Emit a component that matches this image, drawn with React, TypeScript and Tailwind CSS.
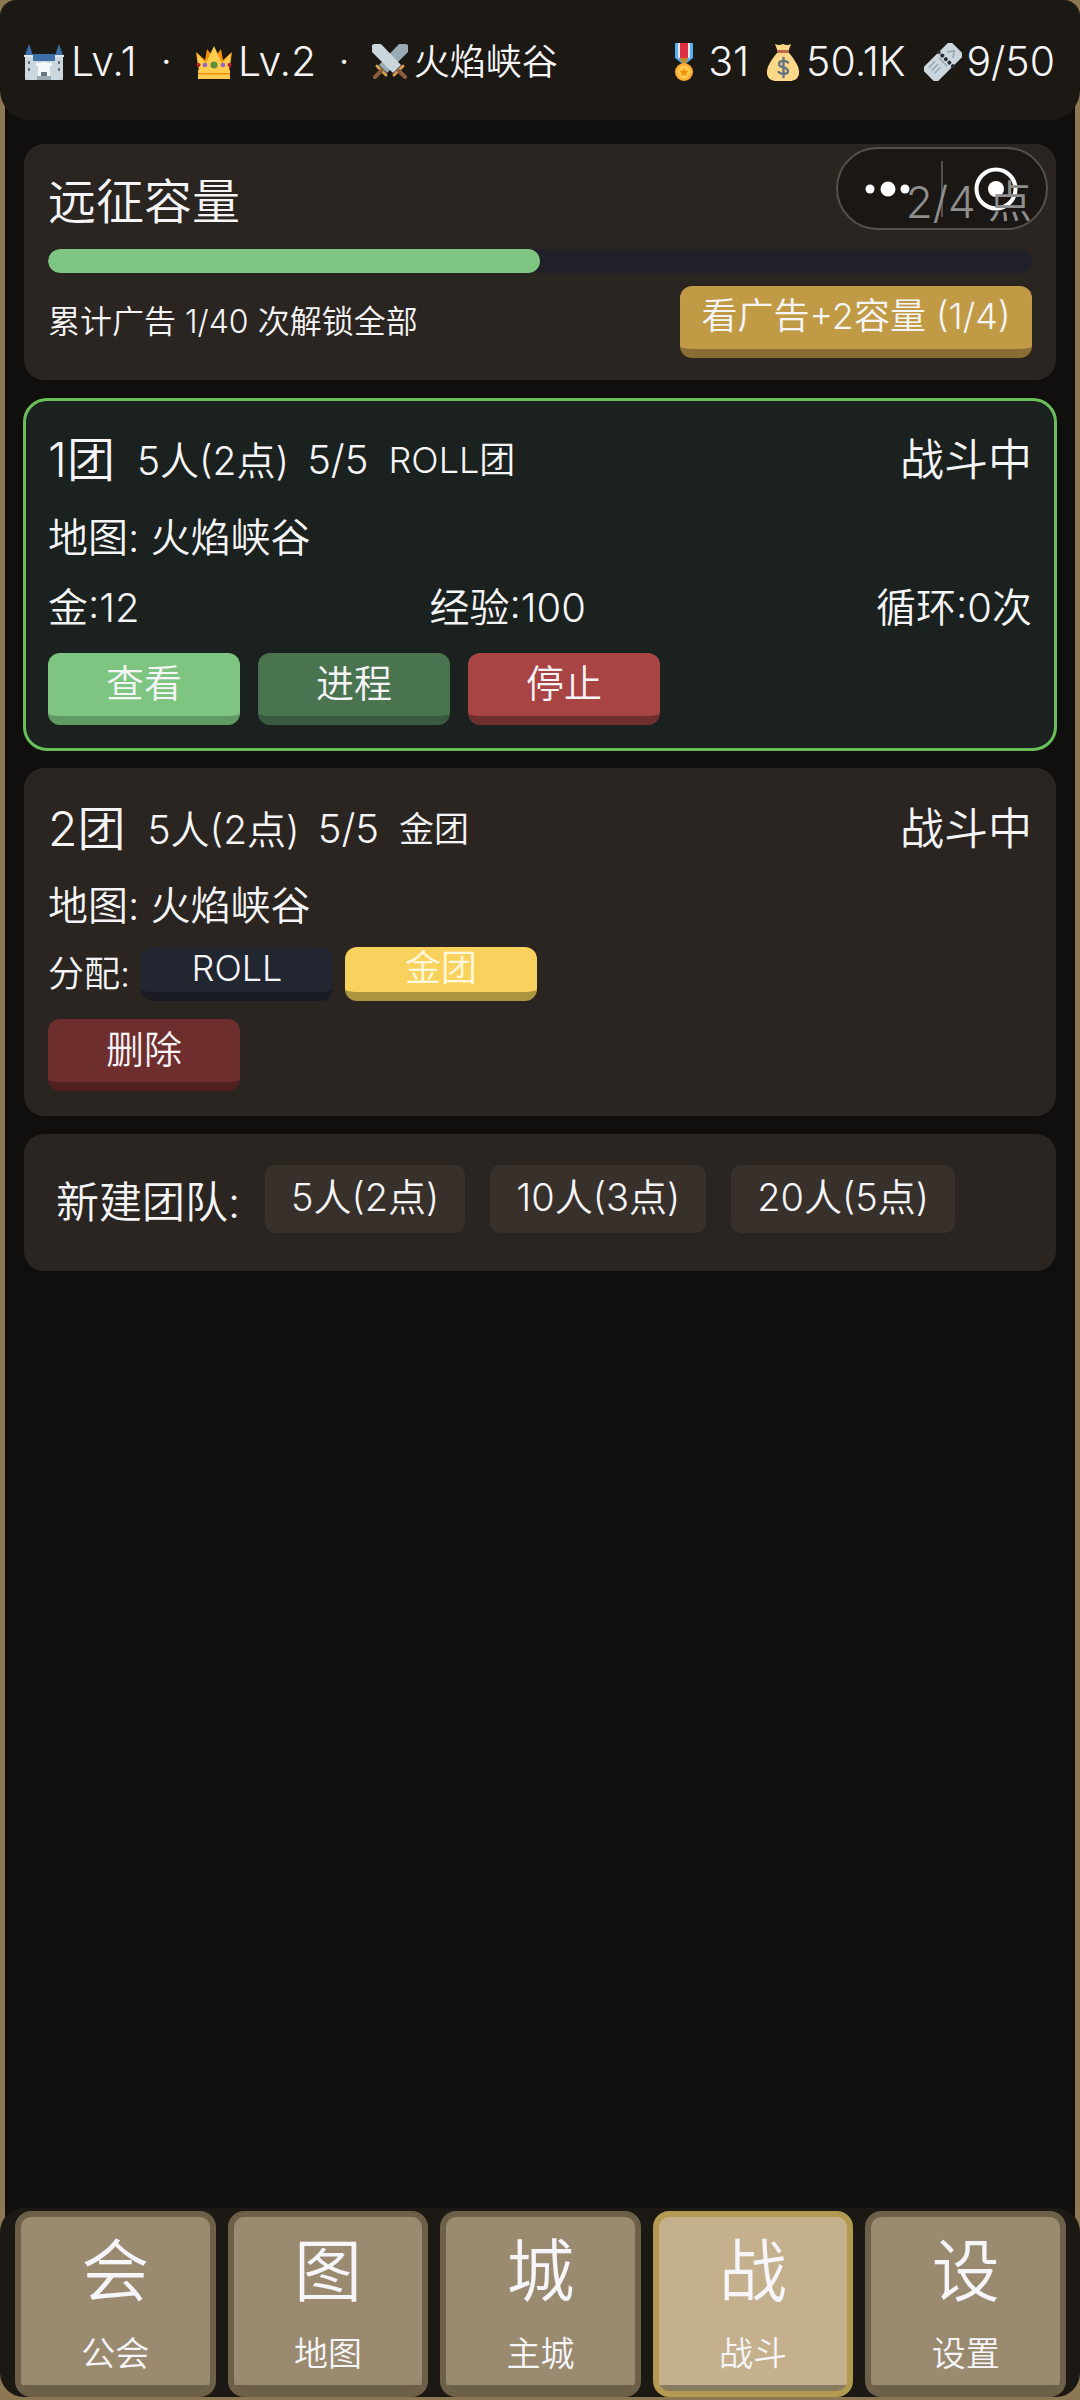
const font = { fontFamily: 'Inter, "Noto Sans CJK SC", sans-serif' };
const Castle = () => (
  <svg viewBox="0 0 40 36" className="w-[40px] h-[36px]">
    <rect x="1" y="11" width="38" height="25" rx="1" fill="#ccd6dd" />
    <path d="M1 11 L5 0 L9 11Z M31 11 L35 0 L39 11Z" fill="#3b6fa5" />
    <rect x="9" y="10" width="22" height="7" fill="#3b6fa5" />
    <rect x="0" y="11" width="9" height="2" fill="#e1e8ed" /><rect x="31" y="11" width="9" height="2" fill="#e1e8ed" />
    <path d="M14 36 V24 a6 6 0 0 1 12 0 V36Z" fill="#f5f8fa" />
    <rect x="12" y="19" width="16" height="3" fill="#f5f8fa" />
    <rect x="17" y="28" width="6" height="8" fill="#66757f" />
    <rect x="13" y="32" width="14" height="4" fill="#99aab5" />
    <rect x="4" y="17" width="2" height="3" fill="#66757f" /><rect x="34" y="17" width="2" height="3" fill="#66757f" />
    <rect x="4" y="24" width="2" height="3" fill="#66757f" /><rect x="34" y="24" width="2" height="3" fill="#66757f" />
  </svg>
);
const Crown = () => (
  <svg viewBox="0 0 36 34" className="w-[36px] h-[34px]">
    <path d="M2 22 L0 7 L9 15 L11 4 L18 13 L25 4 L27 15 L36 7 L34 22Z" fill="#f4900c" />
    <path d="M3 27 L1 8 L10 18 L18 1 L26 18 L35 8 L33 27Z" fill="#ffcc4d" />
    <rect x="2" y="25" width="32" height="9" fill="#ffcc4d" /><rect x="2" y="28" width="32" height="1.5" fill="#f4900c" />
    <circle cx="18" cy="20" r="3.6" fill="#5c913b" />
    <circle cx="9" cy="20" r="2.3" fill="#9266cc" /><circle cx="27" cy="20" r="2.3" fill="#9266cc" />
    <circle cx="2.5" cy="20" r="2" fill="#be1931" /><circle cx="33.5" cy="20" r="2" fill="#be1931" />
  </svg>
);
const Swords = () => (
  <svg viewBox="0 0 36 36" className="w-[36px] h-[36px]">
    <path d="M36 1 L34 0 L27 0 L7 21 L15 29 L36 8Z" fill="#99aab5" />
    <path d="M0 1 L2 0 L9 0 L29 21 L21 29 L0 8Z" fill="#ccd6dd" />
    <path d="M5 22 L14 31 M31 22 L22 31" stroke="#d99e4f" strokeWidth="3" strokeLinecap="round" />
    <path d="M9 27 L3 33 M27 27 L33 33" stroke="#8a5b3c" strokeWidth="4" strokeLinecap="round" />
  </svg>
);
const Medal = () => (
  <svg viewBox="0 0 20 38" className="w-[20px] h-[38px]">
    <path d="M1 0 H19 V15 L10 22 L1 15Z" fill="#55acee" />
    <rect x="4" y="0" width="12" height="15" fill="#e1e8ed" />
    <rect x="6" y="0" width="8" height="15" fill="#dd2e44" />
    <path d="M6 15 H14 L12 20 H8Z" fill="#c68a1f" />
    <circle cx="10" cy="29" r="9" fill="#ffac33" />
    <circle cx="10" cy="29" r="6.5" fill="#ffcc4d" />
    <path d="M10 24.5 L11.4 27.8 L14.6 28 L12.2 30.2 L13 33.4 L10 31.6 L7 33.4 L7.8 30.2 L5.4 28 L8.6 27.8Z" fill="#f4900c" />
  </svg>
);
const Bag = () => (
  <svg viewBox="0 0 34 38" className="w-[34px] h-[38px] block">
    <path d="M9 1 Q13 3 17 1 Q21 3 25 1 L22 9 H12Z" fill="#fdd888" />
    <rect x="11" y="7" width="12" height="3" rx="1" fill="#bf6952" />
    <path d="M11 10 H23 C28 16 34 24 33 31 C32 36 28 38 24 38 H10 C6 38 2 36 1 31 C0 24 6 16 11 10Z" fill="#fdd888" />
    <path d="M22 19.5 C20.5 17.5 13 17 13 21 C13 25.5 22 23.5 22 28 C22 32 14.5 31.5 12.5 29 M17.5 15 V34" stroke="#67757f" strokeWidth="2.4" fill="none" strokeLinecap="round" />
  </svg>
);
const Ticket = () => (
  <svg viewBox="0 0 38 38" className="w-[38px] h-[38px] block">
    <g transform="rotate(45 19 19)">
      <rect x="9" y="-1" width="20" height="40" rx="3" fill="#ccd6dd" />
      <path d="M13 19 H25 M13 24 V33 M17 24 V33 M21 24 V33" stroke="#99aab5" strokeWidth="1.6" />
      <circle cx="9" cy="15" r="2" fill="#292f33" /><circle cx="14" cy="15" r="2" fill="#292f33" /><circle cx="19" cy="15" r="2" fill="#292f33" /><circle cx="24" cy="15" r="2" fill="#292f33" /><circle cx="29" cy="15" r="2" fill="#292f33" />
      <path d="M15 9 L19 3 L23 9" stroke="#99aab5" strokeWidth="1.6" fill="none" />
    </g>
  </svg>
);
function Btn({ label, bg, base, text = 'text-[#f5f5f7]', w = 'w-[192px]', h = 'h-[72px]', size = 'text-[38px]' }: { label: string; bg: string; base: string; text?: string; w?: string; h?: string; size?: string }) {
  return (
    <div className={`${w} ${h} ${bg} ${base} ${text} ${size} rounded-[12px] border-b-[9px] flex items-center justify-center leading-none pb-[3px] whitespace-nowrap`}>
      {label}
    </div>
  );
}
function Tab({ icon, label, active }: { icon: string; label: string; active?: boolean }) {
  return (
    <div className={`flex-1 h-[186px] rounded-[16px] border-[6px] ${active ? 'border-[#b29a50] bg-[#c4b08c]' : 'border-[#6e5f49] bg-[#9a8a6f]'} overflow-hidden flex flex-col items-center text-[#f5f5fa]`}>
      <div className="text-[68px] leading-none mt-[20px]">{icon}</div>
      <div className="text-[34px] leading-none mt-[32px]">{label}</div>
      <div className={`mt-auto w-full h-[6px] ${active ? 'bg-[#887a5e]' : 'bg-[#6b5e49]'}`} />
    </div>
  );
}
export default function App() {
  return (
    <div style={font} className="w-[1080px] h-[2400px] bg-[#8c7853] overflow-hidden flex flex-col text-[#f5f5f7] font-[350] relative">
      <div className="h-[120px] shrink-0 bg-[#1c1914] rounded-b-[30px] rounded-t-[16px] flex items-center justify-between pl-[24px] pr-[25px] pt-[3px] text-[41px] relative z-10 whitespace-nowrap">
        <div className="flex items-center">
          <Castle /><span className="ml-[7px]">Lv.1</span><span className="mx-[24px]">·</span>
          <Crown /><span className="ml-[6px]">Lv.2</span><span className="mx-[22px]">·</span>
          <Swords /><span className="ml-[6px] text-[36px]">火焰峡谷</span>
        </div>
        <div className="flex items-center">
          <Medal /><span className="ml-[14px]">31</span>
          <span className="ml-[17px]"><Bag /></span><span className="ml-[6px]">50.1K</span>
          <span className="ml-[19px]"><Ticket /></span><span className="ml-[4px]">9/50</span>
        </div>
      </div>
      <div className="flex-1 mx-[5px] -mt-[30px] pt-[54px] bg-[#100f0d] px-[19px] flex flex-col">
        <div className="h-[236px] shrink-0 bg-[#2a2521] rounded-[20px] px-[24px] pt-[28px] flex flex-col">
          <div className="flex justify-between items-center h-[60px]">
            <span className="text-[48px] leading-none">远征容量</span>
            <span className="text-[44px] leading-none text-[#8f8f8f] relative z-30">2/4 点</span>
          </div>
          <div className="h-[24px] mt-[17px] bg-[#1f2028] rounded-full overflow-hidden">
            <div className="h-full w-1/2 bg-[#7dc581] rounded-full" />
          </div>
          <div className="flex justify-between items-center mt-[13px]">
            <span className="text-[32px] leading-none">累计广告 1/40 次解锁全部</span>
            <Btn label="看广告+2容量 (1/4)" bg="bg-[#c09a45]" base="border-[#896c33]" w="w-[352px]" size="text-[36px]" />
          </div>
        </div>
        <div className="h-[353px] shrink-0 mt-[18px] mx-[-1px] bg-[#1a211e] border-[3px] border-[#6abf5a] rounded-[24px] px-[22px] flex flex-col">
          <div className="flex justify-between items-center mt-[31px] h-[56px]">
            <div className="flex items-center">
              <span className="text-[48px] leading-none mr-[22px]">1团</span>
              <span className="text-[39px] leading-none mr-[18px]">5人(2点)</span>
              <span className="text-[40px] leading-none mr-[20px]">5/5</span>
              <span className="text-[36px] leading-none">ROLL团</span>
            </div>
            <span className="text-[44px] leading-none">战斗中</span>
          </div>
          <div className="text-[40px] leading-none mt-[30px]">地图: 火焰峡谷</div>
          <div className="flex justify-between text-[40px] leading-none mt-[30px]">
            <span>金:12</span><span>经验:100</span><span>循环:0次</span>
          </div>
          <div className="flex gap-[18px] mt-[25px]">
            <Btn label="查看" bg="bg-[#7dc581]" base="border-[#5f9a63]" />
            <Btn label="进程" bg="bg-[#4a7350]" base="border-[#3a5a3f]" />
            <Btn label="停止" bg="bg-[#a84444]" base="border-[#6e2f2f]" />
          </div>
        </div>
        <div className="h-[348px] shrink-0 mt-[17px] bg-[#2a2521] rounded-[20px] px-[24px] flex flex-col">
          <div className="flex justify-between items-center mt-[33px] h-[56px]">
            <div className="flex items-center">
              <span className="text-[48px] leading-none mr-[22px]">2团</span>
              <span className="text-[39px] leading-none mr-[18px]">5人(2点)</span>
              <span className="text-[40px] leading-none mr-[20px]">5/5</span>
              <span className="text-[35px] leading-none">金团</span>
            </div>
            <span className="text-[44px] leading-none">战斗中</span>
          </div>
          <div className="text-[40px] leading-none mt-[29px]">地图: 火焰峡谷</div>
          <div className="flex items-center mt-[21px] gap-[12px]">
            <span className="text-[36px] leading-none w-[81px] whitespace-nowrap -mt-[1px]">分配:</span>
            <Btn label="ROLL" bg="bg-[#222630]" base="border-[#191c23]" h="h-[54px]" size="text-[36px]" />
            <Btn label="金团" bg="bg-[#f8d25c]" base="border-[#ab953f]" h="h-[54px]" size="text-[36px]" text="text-[#fff8dc]" />
          </div>
          <div className="mt-[18px]">
            <Btn label="删除" bg="bg-[#6f2e2e]" base="border-[#521f1f]" />
          </div>
        </div>
        <div className="h-[137px] shrink-0 mt-[18px] bg-[#2a2521] rounded-[20px] pl-[32px] flex items-center">
          <span className="text-[43px] leading-none w-[209px] whitespace-nowrap">新建团队:</span>
          <div className="flex gap-[25px] -mt-[7px]">
            {['5人(2点)', '10人(3点)', '20人(5点)'].map((t) => (
              <div key={t} className="h-[68px] px-[26px] bg-[#38312b] rounded-[10px] text-[38px] leading-none flex items-center pb-[5px]">{t}</div>
            ))}
          </div>
        </div>
      </div>
      <div className="h-[189px] shrink-0 -mt-[30px] mb-[3px] bg-[#1c1914] rounded-[24px] flex gap-[12px] pl-[15px] pr-[14px] pt-[3px] relative">
        <Tab icon="会" label="公会" />
        <Tab icon="图" label="地图" />
        <Tab icon="城" label="主城" />
        <Tab icon="战" label="战斗" active />
        <Tab icon="设" label="设置" />
      </div>
      <div className="absolute left-[836px] top-[147px] w-[212px] h-[83px] rounded-full border-[2px] border-[#55524e] bg-[#1a1714] z-20">
        <svg viewBox="0 0 212 83" className="absolute left-[-2px] top-[-2px] w-[212px] h-[83px]">
          <circle cx="34" cy="42" r="4.5" fill="#fff" /><circle cx="52" cy="42" r="7.5" fill="#fff" /><circle cx="69" cy="42" r="4.5" fill="#fff" />
          <rect x="105" y="14" width="2" height="56" fill="#55524e" />
          <circle cx="160" cy="42" r="19.5" stroke="#fff" strokeWidth="4" fill="none" /><circle cx="160" cy="42" r="8" fill="#fff" />
        </svg>
      </div>
    </div>
  );
}
